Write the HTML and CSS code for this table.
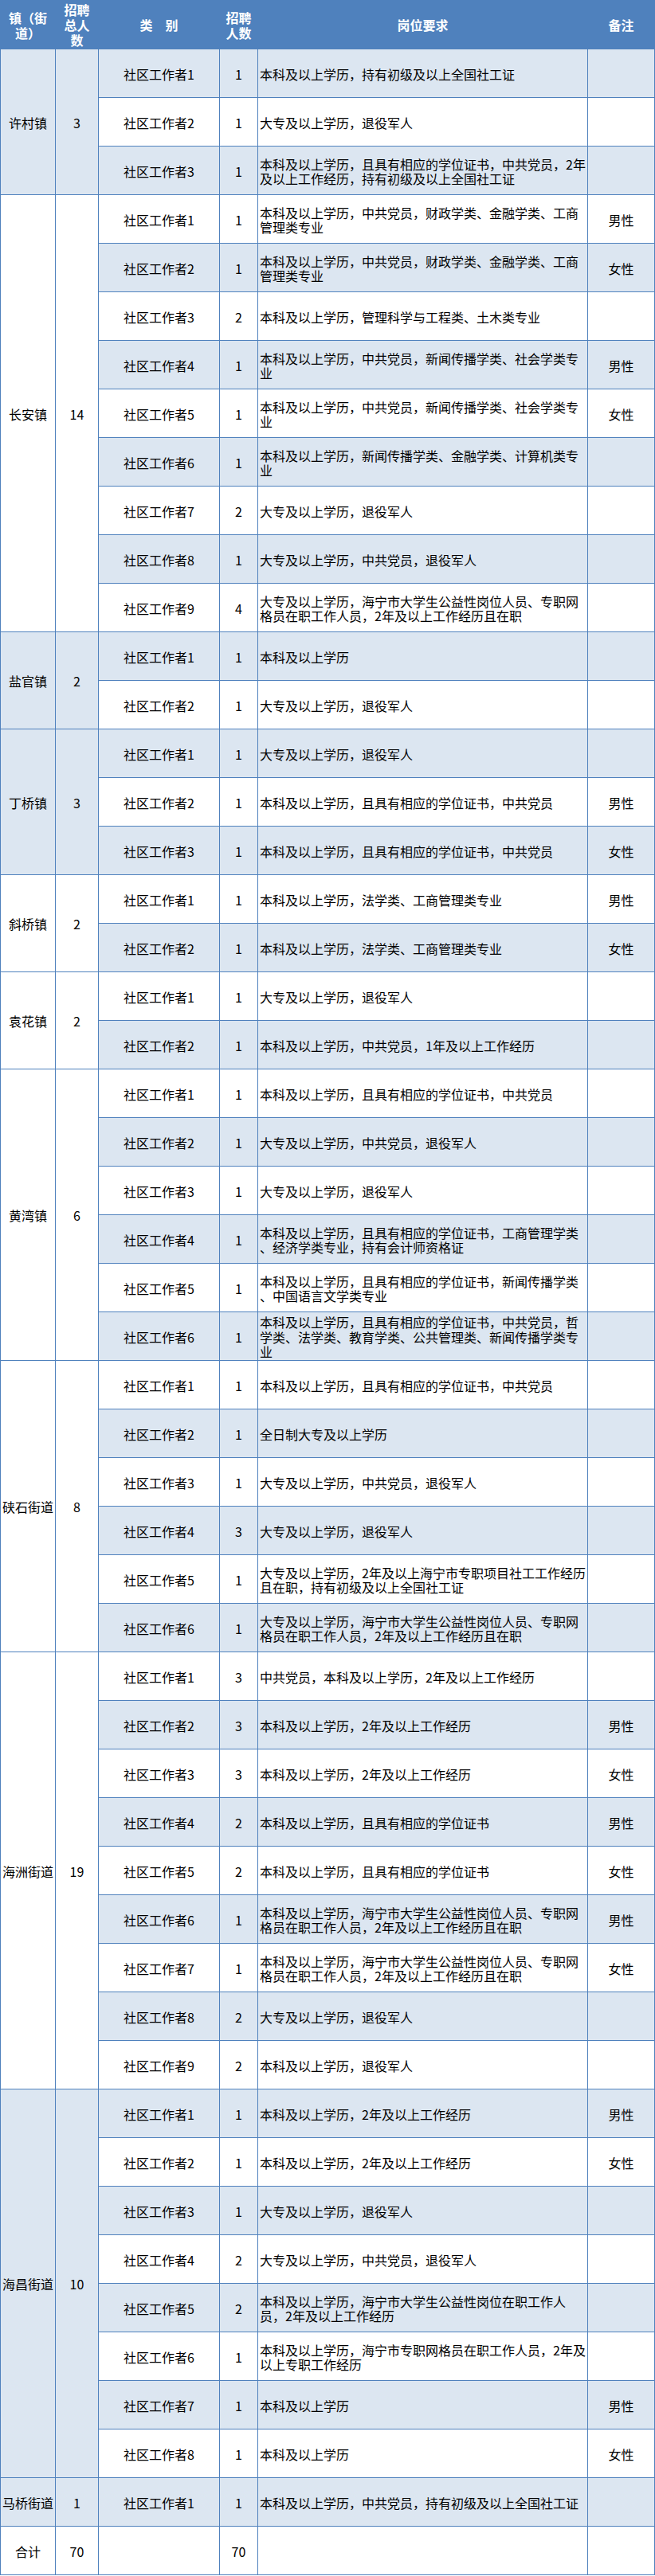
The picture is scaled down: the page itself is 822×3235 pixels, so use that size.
FILE: index.html
```html
<!DOCTYPE html>
<html lang="zh-CN">
<head>
<meta charset="utf-8">
<title>社区工作者招聘岗位表</title>
<link rel="stylesheet" href="styles.css">
</head>
<body>
<table class="jobs">
<colgroup>
<col class="w-town"><col class="w-total"><col class="w-cat"><col class="w-num"><col class="w-req"><col class="w-note">
</colgroup>
<thead>
<tr class="head-row">
<th class="town">镇（街<br>道）</th>
<th class="total">招聘<br>总人<br>数</th>
<th>类　别</th>
<th>招聘<br>人数</th>
<th>岗位要求</th>
<th>备注</th>
</tr>
</thead>
<tbody>
<!-- 许村镇 -->
<tr class="row"><td class="town alt" rowspan="3">许村镇</td><td class="total alt" rowspan="3">3</td><td class="alt">社区工作者1</td><td class="alt">1</td><td class="req alt">本科及以上学历，持有初级及以上全国社工证</td><td class="alt"></td></tr>
<tr class="row"><td>社区工作者2</td><td>1</td><td class="req">大专及以上学历，退役军人</td><td></td></tr>
<tr class="row"><td class="alt">社区工作者3</td><td class="alt">1</td><td class="req alt">本科及以上学历，且具有相应的学位证书，中共党员，2年<br>及以上工作经历，持有初级及以上全国社工证</td><td class="alt"></td></tr>
<!-- 长安镇 -->
<tr class="row"><td class="town" rowspan="9">长安镇</td><td class="total" rowspan="9">14</td><td>社区工作者1</td><td>1</td><td class="req">本科及以上学历，中共党员，财政学类、金融学类、工商<br>管理类专业</td><td>男性</td></tr>
<tr class="row"><td class="alt">社区工作者2</td><td class="alt">1</td><td class="req alt">本科及以上学历，中共党员，财政学类、金融学类、工商<br>管理类专业</td><td class="alt">女性</td></tr>
<tr class="row"><td>社区工作者3</td><td>2</td><td class="req">本科及以上学历，管理科学与工程类、土木类专业</td><td></td></tr>
<tr class="row"><td class="alt">社区工作者4</td><td class="alt">1</td><td class="req alt">本科及以上学历，中共党员，新闻传播学类、社会学类专<br>业</td><td class="alt">男性</td></tr>
<tr class="row"><td>社区工作者5</td><td>1</td><td class="req">本科及以上学历，中共党员，新闻传播学类、社会学类专<br>业</td><td>女性</td></tr>
<tr class="row"><td class="alt">社区工作者6</td><td class="alt">1</td><td class="req alt">本科及以上学历，新闻传播学类、金融学类、计算机类专<br>业</td><td class="alt"></td></tr>
<tr class="row"><td>社区工作者7</td><td>2</td><td class="req">大专及以上学历，退役军人</td><td></td></tr>
<tr class="row"><td class="alt">社区工作者8</td><td class="alt">1</td><td class="req alt">大专及以上学历，中共党员，退役军人</td><td class="alt"></td></tr>
<tr class="row"><td>社区工作者9</td><td>4</td><td class="req">大专及以上学历，海宁市大学生公益性岗位人员、专职网<br>格员在职工作人员，2年及以上工作经历且在职</td><td></td></tr>
<!-- 盐官镇 -->
<tr class="row"><td class="town alt" rowspan="2">盐官镇</td><td class="total alt" rowspan="2">2</td><td class="alt">社区工作者1</td><td class="alt">1</td><td class="req alt">本科及以上学历</td><td class="alt"></td></tr>
<tr class="row"><td>社区工作者2</td><td>1</td><td class="req">大专及以上学历，退役军人</td><td></td></tr>
<!-- 丁桥镇 -->
<tr class="row"><td class="town alt" rowspan="3">丁桥镇</td><td class="total alt" rowspan="3">3</td><td class="alt">社区工作者1</td><td class="alt">1</td><td class="req alt">大专及以上学历，退役军人</td><td class="alt"></td></tr>
<tr class="row"><td>社区工作者2</td><td>1</td><td class="req">本科及以上学历，且具有相应的学位证书，中共党员</td><td>男性</td></tr>
<tr class="row"><td class="alt">社区工作者3</td><td class="alt">1</td><td class="req alt">本科及以上学历，且具有相应的学位证书，中共党员</td><td class="alt">女性</td></tr>
<!-- 斜桥镇 -->
<tr class="row"><td class="town" rowspan="2">斜桥镇</td><td class="total" rowspan="2">2</td><td>社区工作者1</td><td>1</td><td class="req">本科及以上学历，法学类、工商管理类专业</td><td>男性</td></tr>
<tr class="row"><td class="alt">社区工作者2</td><td class="alt">1</td><td class="req alt">本科及以上学历，法学类、工商管理类专业</td><td class="alt">女性</td></tr>
<!-- 袁花镇 -->
<tr class="row"><td class="town" rowspan="2">袁花镇</td><td class="total" rowspan="2">2</td><td>社区工作者1</td><td>1</td><td class="req">大专及以上学历，退役军人</td><td></td></tr>
<tr class="row"><td class="alt">社区工作者2</td><td class="alt">1</td><td class="req alt">本科及以上学历，中共党员，1年及以上工作经历</td><td class="alt"></td></tr>
<!-- 黄湾镇 -->
<tr class="row"><td class="town" rowspan="6">黄湾镇</td><td class="total" rowspan="6">6</td><td>社区工作者1</td><td>1</td><td class="req">本科及以上学历，且具有相应的学位证书，中共党员</td><td></td></tr>
<tr class="row"><td class="alt">社区工作者2</td><td class="alt">1</td><td class="req alt">大专及以上学历，中共党员，退役军人</td><td class="alt"></td></tr>
<tr class="row"><td>社区工作者3</td><td>1</td><td class="req">大专及以上学历，退役军人</td><td></td></tr>
<tr class="row"><td class="alt">社区工作者4</td><td class="alt">1</td><td class="req alt">本科及以上学历，且具有相应的学位证书，工商管理学类<br>、经济学类专业，持有会计师资格证</td><td class="alt"></td></tr>
<tr class="row"><td>社区工作者5</td><td>1</td><td class="req">本科及以上学历，且具有相应的学位证书，新闻传播学类<br>、中国语言文学类专业</td><td></td></tr>
<tr class="row"><td class="alt">社区工作者6</td><td class="alt">1</td><td class="req alt">本科及以上学历，且具有相应的学位证书，中共党员，哲<br>学类、法学类、教育学类、公共管理类、新闻传播学类专<br>业</td><td class="alt"></td></tr>
<!-- 硖石街道 -->
<tr class="row"><td class="town" rowspan="6">硖石街道</td><td class="total" rowspan="6">8</td><td>社区工作者1</td><td>1</td><td class="req">本科及以上学历，且具有相应的学位证书，中共党员</td><td></td></tr>
<tr class="row"><td class="alt">社区工作者2</td><td class="alt">1</td><td class="req alt">全日制大专及以上学历</td><td class="alt"></td></tr>
<tr class="row"><td>社区工作者3</td><td>1</td><td class="req">大专及以上学历，中共党员，退役军人</td><td></td></tr>
<tr class="row"><td class="alt">社区工作者4</td><td class="alt">3</td><td class="req alt">大专及以上学历，退役军人</td><td class="alt"></td></tr>
<tr class="row"><td>社区工作者5</td><td>1</td><td class="req">大专及以上学历，2年及以上海宁市专职项目社工工作经历<br>且在职，持有初级及以上全国社工证</td><td></td></tr>
<tr class="row"><td class="alt">社区工作者6</td><td class="alt">1</td><td class="req alt">大专及以上学历，海宁市大学生公益性岗位人员、专职网<br>格员在职工作人员，2年及以上工作经历且在职</td><td class="alt"></td></tr>
<!-- 海洲街道 -->
<tr class="row"><td class="town" rowspan="9">海洲街道</td><td class="total" rowspan="9">19</td><td>社区工作者1</td><td>3</td><td class="req">中共党员，本科及以上学历，2年及以上工作经历</td><td></td></tr>
<tr class="row"><td class="alt">社区工作者2</td><td class="alt">3</td><td class="req alt">本科及以上学历，2年及以上工作经历</td><td class="alt">男性</td></tr>
<tr class="row"><td>社区工作者3</td><td>3</td><td class="req">本科及以上学历，2年及以上工作经历</td><td>女性</td></tr>
<tr class="row"><td class="alt">社区工作者4</td><td class="alt">2</td><td class="req alt">本科及以上学历，且具有相应的学位证书</td><td class="alt">男性</td></tr>
<tr class="row"><td>社区工作者5</td><td>2</td><td class="req">本科及以上学历，且具有相应的学位证书</td><td>女性</td></tr>
<tr class="row"><td class="alt">社区工作者6</td><td class="alt">1</td><td class="req alt">本科及以上学历，海宁市大学生公益性岗位人员、专职网<br>格员在职工作人员，2年及以上工作经历且在职</td><td class="alt">男性</td></tr>
<tr class="row"><td>社区工作者7</td><td>1</td><td class="req">本科及以上学历，海宁市大学生公益性岗位人员、专职网<br>格员在职工作人员，2年及以上工作经历且在职</td><td>女性</td></tr>
<tr class="row"><td class="alt">社区工作者8</td><td class="alt">2</td><td class="req alt">大专及以上学历，退役军人</td><td class="alt"></td></tr>
<tr class="row"><td>社区工作者9</td><td>2</td><td class="req">本科及以上学历，退役军人</td><td></td></tr>
<!-- 海昌街道 -->
<tr class="row"><td class="town alt" rowspan="8">海昌街道</td><td class="total alt" rowspan="8">10</td><td class="alt">社区工作者1</td><td class="alt">1</td><td class="req alt">本科及以上学历，2年及以上工作经历</td><td class="alt">男性</td></tr>
<tr class="row"><td>社区工作者2</td><td>1</td><td class="req">本科及以上学历，2年及以上工作经历</td><td>女性</td></tr>
<tr class="row"><td class="alt">社区工作者3</td><td class="alt">1</td><td class="req alt">大专及以上学历，退役军人</td><td class="alt"></td></tr>
<tr class="row"><td>社区工作者4</td><td>2</td><td class="req">大专及以上学历，中共党员，退役军人</td><td></td></tr>
<tr class="row"><td class="alt">社区工作者5</td><td class="alt">2</td><td class="req alt">本科及以上学历，海宁市大学生公益性岗位在职工作人<br>员，2年及以上工作经历</td><td class="alt"></td></tr>
<tr class="row"><td>社区工作者6</td><td>1</td><td class="req">本科及以上学历，海宁市专职网格员在职工作人员，2年及<br>以上专职工作经历</td><td></td></tr>
<tr class="row"><td class="alt">社区工作者7</td><td class="alt">1</td><td class="req alt">本科及以上学历</td><td class="alt">男性</td></tr>
<tr class="row"><td>社区工作者8</td><td>1</td><td class="req">本科及以上学历</td><td>女性</td></tr>
<!-- 马桥街道 -->
<tr class="row"><td class="town alt">马桥街道</td><td class="total alt">1</td><td class="alt">社区工作者1</td><td class="alt">1</td><td class="req alt">本科及以上学历，中共党员，持有初级及以上全国社工证</td><td class="alt"></td></tr>
<!-- 合计 -->
<tr class="row"><td class="town">合计</td><td class="total">70</td><td></td><td>70</td><td class="req"></td><td></td></tr>
</tbody>
</table>
</body>
</html>
```

FILE: styles.css
```css
html, body {
  margin: 0;
  padding: 0;
  background: #ffffff;
}

body {
  font-family: "Noto Sans CJK SC", "Noto Sans", sans-serif;
  font-size: 16px;
  color: #000000;
}

.jobs {
  border-collapse: separate;
  border-spacing: 0;
  table-layout: fixed;
  width: 822px;
}

.w-town { width: 70px; }
.w-total { width: 54px; }
.w-cat { width: 152px; }
.w-num { width: 48px; }
.w-req { width: 414px; }
.w-note { width: 84px; }

.jobs th,
.jobs td {
  box-sizing: border-box;
  border-right: 1px solid #4f81bd;
  border-bottom: 1px solid #4f81bd;
  padding: 2px 0 0 0;
  text-align: center;
  vertical-align: middle;
  line-height: 18.5px;
  white-space: nowrap;
  overflow: hidden;
}

.jobs .town {
  border-left: 1px solid #4f81bd;
}

.jobs th {
  background: #4f81bd;
  color: #ffffff;
  font-weight: bold;
  line-height: 19px;
}

.head-row { height: 62px; }
.row { height: 61px; }

.jobs td.req {
  text-align: left;
  padding-left: 2px;
}

.jobs td.alt {
  background: #dce6f1;
}
```
